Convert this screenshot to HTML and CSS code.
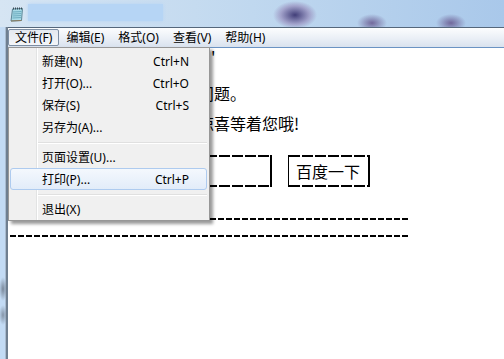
FILE: index.html
```html
<!doctype html>
<html lang="zh-CN">
  <head>
    <meta charset="UTF-8" />
    <title>记事本</title>
    <link rel="stylesheet" href="styles.css">
  </head>
  <body>
    <div class="window">
      <div class="titlebar">
        <svg class="app-icon" width="13" height="15" viewBox="0 0 13 15">
          <path d="M2.5 2 L12.5 1.5 L11.5 13.5 L1 14 Z" fill="#a9dbe8" stroke="#5d8797" stroke-width="1" />
          <path d="M3 5 L11.5 4.6 M2.8 7 L11.3 6.6 M2.6 9 L11.1 8.6 M2.4 11 L10.9 10.6" stroke="#6aaabd" stroke-width="1" />
          <path d="M3.5 0.5 v2 M5.5 0.5 v2 M7.5 0.5 v2 M9.5 0.5 v2 M11.5 0.5 v2" stroke="#3b4a55" stroke-width="1" />
          <path d="M1 14 L11.5 13.5" stroke="#8c7a5a" stroke-width="1" />
        </svg>
        <div class="title-blur"></div>
      </div>
      <div class="body">
        <div class="frame-left"></div>
        <div class="client">
          <div class="menubar">
            <span class="menubar-item open">文件(F)</span>
            <span class="menubar-item">编辑(E)</span>
            <span class="menubar-item">格式(O)</span>
            <span class="menubar-item">查看(V)</span>
            <span class="menubar-item">帮助(H)</span>
          </div>
          <div class="doc">
            <div class="line"><span class="tick">'</span></div>
            <div class="line">问题。</div>
            <div class="line">惊喜等着您哦!</div>
            <div class="search-row">
              <div class="search-input"></div>
              <div class="search-btn">百度一下</div>
            </div>
            <div class="dash-line first"></div>
            <div class="dash-line"></div>
          </div>
        </div>
      </div>

      <div class="dropdown">
        <div class="menu-item"><span>新建(N)</span><span>Ctrl+N</span></div>
        <div class="menu-item"><span>打开(O)...</span><span>Ctrl+O</span></div>
        <div class="menu-item"><span>保存(S)</span><span>Ctrl+S</span></div>
        <div class="menu-item"><span>另存为(A)...</span></div>
        <div class="menu-sep"></div>
        <div class="menu-item"><span>页面设置(U)...</span></div>
        <div class="menu-item active"><span>打印(P)...</span><span>Ctrl+P</span></div>
        <div class="menu-sep"></div>
        <div class="menu-item"><span>退出(X)</span></div>
      </div>
    </div>
  </body>
</html>
```

FILE: styles.css
```css
* {
  box-sizing: border-box;
  margin: 0;
  padding: 0;
}

body {
  width: 504px;
  height: 359px;
  overflow: hidden;
  font-family: "Noto Sans", "Noto Sans CJK SC", sans-serif;
  color: #000;
}

.window {
  position: relative;
  display: flex;
  flex-direction: column;
  width: 504px;
  height: 359px;
}

/* title bar (aero glass, blurred) */
.titlebar {
  height: 27px;
  display: flex;
  align-items: center;
  gap: 5px;
  padding-left: 10px;
  background:
    radial-gradient(ellipse 22px 14px at 295px 15px, rgba(52, 46, 108, 0.9), rgba(130, 100, 160, 0.45) 65%, transparent),
    radial-gradient(ellipse 15px 9px at 372px 23px, rgba(92, 70, 128, 0.75), transparent),
    radial-gradient(ellipse 15px 9px at 451px 23px, rgba(92, 70, 128, 0.75), transparent),
    linear-gradient(90deg, #d6e5f3, #c0d8ef 50%, #a9c8ea);
}

.app-icon {
  flex: none;
  margin-top: 1px;
}

.title-blur {
  width: 135px;
  height: 17px;
  margin-top: -2px;
  background: #b6d5f5;
  box-shadow: 0 0 3px #b6d5f5;
}

.body {
  flex: 1;
  display: flex;
}

.frame-left {
  width: 8px;
  background:
    radial-gradient(ellipse 4px 12px at 3px 262px, rgba(90, 100, 115, 0.7), transparent),
    radial-gradient(ellipse 4px 10px at 3px 288px, rgba(90, 100, 115, 0.6), transparent),
    linear-gradient(90deg, #c3dbf4 0 5px, #a9bbcf 5px 6px, #6f7f90 6px 8px);
}

.client {
  flex: 1;
  display: flex;
  flex-direction: column;
}

/* menu bar */
.menubar {
  height: 21px;
  display: flex;
  align-items: flex-start;
  padding-top: 1px;
  border-top: 1px solid #55677b;
  border-bottom: 1px solid #6b93c3;
  background: linear-gradient(#fcfdfe, #eaeff6 55%, #d9e2ee);
  font-size: 12px;
}

.menubar-item {
  height: 17px;
  line-height: 15px;
  padding: 0 6px;
  border: 1px solid transparent;
  border-radius: 2px;
  white-space: nowrap;
}

.menubar-item.open {
  border-color: #7d8ea3;
  background: linear-gradient(#e4e9f0, #f4f6f9);
}

/* document: only the part right of the open menu is visible */
.doc {
  flex: 1;
  background: #fff;
  padding-left: 14px;
  font-family: "Noto Sans CJK SC", sans-serif;
  font-size: 16px;
}

.line {
  height: 30px;
  line-height: 30px;
  padding-left: 176px;
  white-space: nowrap;
}

.tick {
  margin-left: 13px;
  position: relative;
  top: -5px;
}

.search-row {
  display: flex;
  gap: 16px;
  margin-top: 17px;
}

.search-input,
.search-btn {
  height: 32px;
  border-left: 2px solid #000;
  border-right: 2px solid #000;
  background:
    repeating-linear-gradient(90deg, #000 0 11px, transparent 11px 13px) top / 100% 2px no-repeat,
    repeating-linear-gradient(90deg, #000 0 11px, transparent 11px 13px) bottom / 100% 2px no-repeat;
}

.search-input {
  width: 250px;
}

.search-btn {
  width: 82px;
  border-left-width: 1px;
  padding-left: 7px;
  line-height: 32px;
  white-space: nowrap;
}

.dash-line {
  width: 399px;
  height: 2px;
  margin-left: -12px;
  margin-top: 15px;
  background: repeating-linear-gradient(90deg, #000 0 6px, transparent 6px 8px);
}

.dash-line.first {
  margin-top: 31px;
}

/* file menu dropdown */
.dropdown {
  position: absolute;
  left: 8px;
  top: 47px;
  width: 202px;
  height: 174px;
  padding-top: 2px;
  border: 1px solid #979797;
  background:
    linear-gradient(90deg, transparent 27px, #e2e3e3 27px 28px, #fff 28px 29px, transparent 29px),
    #f0f0f0;
  box-shadow: 3px 3px 3px rgba(0, 0, 0, 0.4);
  font-size: 12px;
}

.menu-item {
  height: 22px;
  margin: 0 2px 0 1px;
  padding: 0 17px 0 31px;
  display: flex;
  align-items: center;
  justify-content: space-between;
  border: 1px solid transparent;
  border-radius: 3px;
  white-space: nowrap;
}

.menu-item.active {
  border-color: #aecbef;
  background: linear-gradient(#f4f8fd, #e2ecf9);
}

.menu-sep {
  height: 8px;
  margin: 0 2px 0 29px;
  background: linear-gradient(transparent 4px, #e0e0e0 4px 5px, #fff 5px 6px, transparent 6px);
}
```
